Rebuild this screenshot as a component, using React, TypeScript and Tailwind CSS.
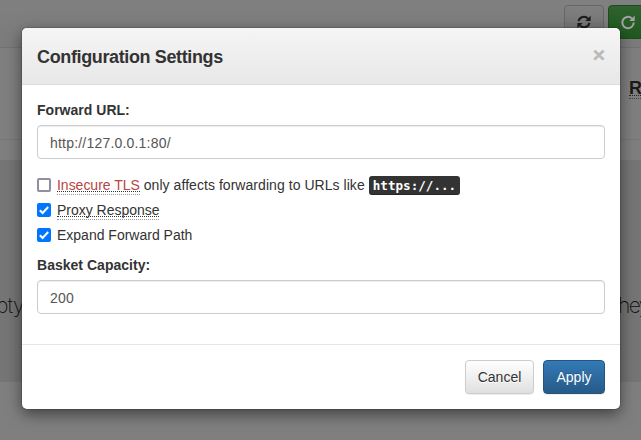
import React, { useState } from "react";

function RefreshIcon() {
  return (
    <svg viewBox="0 0 14 14" className="size-[14px] overflow-visible">
      <path d="M1.6 6.2A5.4 5.4 0 0 1 11 3.6M12.4 7.8A5.4 5.4 0 0 1 3 10.4" fill="none" stroke="#1c1c1c" strokeWidth="2" />
      <path d="M13.6 .8V6H8.4ZM.4 13.2V8H5.6Z" fill="#1c1c1c" />
    </svg>
  );
}

function RepeatIcon() {
  return (
    <svg viewBox="0 0 14 14" className="size-[14px] overflow-visible">
      <path d="M10.9 3.4A5.7 5.7 0 1 0 12.7 7.5" fill="none" stroke="#a3a3a3" strokeWidth="2" />
      <path d="M13.7 .6V6H8.3Z" fill="#a3a3a3" />
    </svg>
  );
}

function CheckRow({ on, children }: { on: boolean; children: React.ReactNode }) {
  const [checked, setChecked] = useState(on);
  return (
    <label className="flex h-[25px] items-center pb-[5px] leading-5">
      <input type="checkbox" className="sr-only" checked={checked} onChange={() => setChecked(!checked)} />
      <span
        className={
          checked
            ? "mr-[6px] flex size-[14px] shrink-0 items-center justify-center rounded-[2px] bg-[#0075ff]"
            : "mr-[6px] size-[14px] shrink-0 rounded-[2px] border-2 border-[#8f8f9d] bg-white"
        }
      >
        {checked && (
          <svg viewBox="0 0 14 14" className="size-[14px]">
            <path d="M2.8 7.3L5.6 10L11.2 4" fill="none" stroke="#fff" strokeWidth="2" />
          </svg>
        )}
      </span>
      {children}
    </label>
  );
}

function Field({ label, value }: { label: string; value: string }) {
  return (
    <div>
      <label className="mb-[5px] block font-bold leading-5 tracking-[0.02px]">{label}</label>
      <input
        defaultValue={value}
        className="block h-[34px] w-full rounded-[4px] border border-[#ccc] bg-white px-3 pt-px text-[14px] tracking-[0.2px] text-[#555] shadow-[inset_0_1px_1px_rgba(0,0,0,0.075)] outline-none"
      />
    </div>
  );
}

function Hint({ children }: { children: React.ReactNode }) {
  return (
    <span className="mt-[3px] h-[17px] border-b border-dotted border-[#999]">
      <span className="block h-[14px] border-b border-dotted border-[#333] leading-[14px] tracking-[-0.02px]">{children}</span>
    </span>
  );
}

export default function App() {
  return (
    <div className="relative h-[440px] w-[641px] overflow-hidden bg-[#7f7f7f] font-['Liberation_Sans',Arial,sans-serif] text-[14px] text-[#333]">
      <div className="flex h-[48px] justify-end gap-1 overflow-hidden border-b border-[#737373] bg-gradient-to-b from-[#808080] to-[#7b7b7b] pt-[5px]">
        <div className="flex h-[34px] w-10 shrink-0 justify-center rounded-[4px] border border-[#666] bg-gradient-to-b from-[#808080] to-[#707070] pt-[9px]">
          <RefreshIcon />
        </div>
        <div className="-mr-[8px] h-[34px] w-[41px] shrink-0 rounded-[4px] border border-[#1f4b1f] bg-gradient-to-b from-[#2e622e] to-[#205820] pl-3 pt-[9px]">
          <RepeatIcon />
        </div>
      </div>
      <div className="flex h-[92px] justify-end border-b border-[#777]">
        <div className="mt-[29px] w-3 overflow-hidden">
          <div className="h-[19px] w-6 border-b border-dotted border-[#222] text-[18px] font-bold leading-[22px] text-[#1a1a1a]">R</div>
          <div className="mt-[2px] border-b border-dotted border-[#444]" />
        </div>
      </div>
      <div className="mt-5 flex h-[222px] items-center justify-between overflow-hidden bg-[#757575] pt-[69px] font-[Inter,sans-serif] text-[21px] font-extralight leading-8 text-[#111]">
        <span className="-ml-[4px] tracking-[-0.8px]">pty</span>
        <span className="w-[23px] whitespace-nowrap tracking-[-1.6px]">hey</span>
      </div>

      <div
        role="dialog"
        className="absolute left-[22px] top-[28px] flex h-[381px] w-[598px] flex-col rounded-[5px] bg-white shadow-[0_0_0_1px_rgba(0,0,0,0.12),0_5px_15px_rgba(0,0,0,0.5)]"
      >
        <header className="flex h-[57px] items-center justify-between rounded-t-[5px] border-b border-[#ddd] bg-gradient-to-b from-[#f5f5f5] to-[#e8e8e8] px-[15px]">
          <h4 className="pt-[2px] text-[18px] font-bold tracking-[-0.37px]">Configuration Settings</h4>
          <button aria-label="Close" className="pb-[3px] text-[21px] font-bold leading-5 text-[#bababa] [-webkit-text-stroke:0.5px_#bababa] [text-shadow:0_1px_0_#fff]">×</button>
        </header>
        <main className="flex-1 px-[15px] pt-[15px]">
          <Field label="Forward URL:" value="http://127.0.0.1:80/" />
          <div className="pt-4">
            <CheckRow on={false}>
              <span className="contents text-[#b94442]">
                <Hint>Insecure TLS</Hint>
              </span>
              <span className="ml-1 tracking-[0.05px]">only affects forwarding to URLs like</span>
              <kbd className="ml-1 h-[19px] rounded-[3px] bg-[#333] px-1 font-['DejaVu_Sans_Mono',monospace] text-[12.6px] font-bold leading-[19px] text-white shadow-[inset_0_-1px_0_rgba(0,0,0,0.25)]">https://...</kbd>
            </CheckRow>
            <CheckRow on>
              <Hint>Proxy Response</Hint>
            </CheckRow>
            <CheckRow on>
              <span>Expand Forward Path</span>
            </CheckRow>
          </div>
          <div className="pt-[5px]">
            <Field label="Basket Capacity:" value="200" />
          </div>
        </main>
        <footer className="flex h-[65px] justify-end gap-[9px] border-t border-[#e5e5e5] px-[15px] pt-[15px]">
          <button className="h-[34px] w-[69px] rounded-[4px] border border-[#ccc] bg-gradient-to-b from-white to-[#e0e0e0] shadow-[0_1px_1px_rgba(0,0,0,0.075)] [text-shadow:0_1px_0_#fff]">Cancel</button>
          <button className="h-[34px] w-[62px] rounded-[4px] border border-[#245580] bg-gradient-to-b from-[#337ab7] to-[#265a88] text-white shadow-[0_1px_1px_rgba(0,0,0,0.075)] [text-shadow:0_-1px_0_rgba(0,0,0,0.2)]">Apply</button>
        </footer>
      </div>
    </div>
  );
}
